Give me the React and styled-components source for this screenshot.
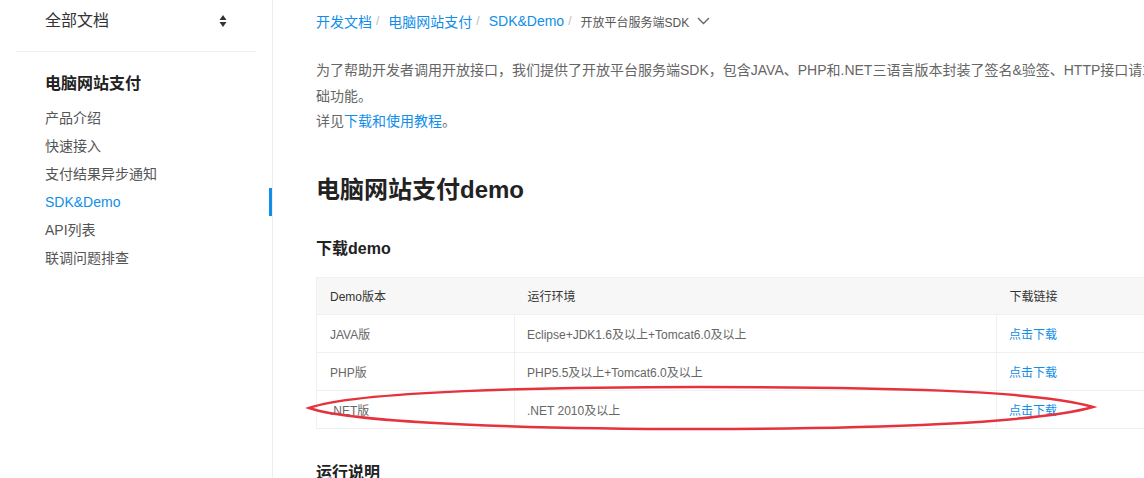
import React from "react";
import styled, { createGlobalStyle } from "styled-components";

const Global = createGlobalStyle`
  html, body { margin: 0; padding: 0; overflow: hidden; background: #fff; }
  body { font-family: "Liberation Sans", "Noto Sans CJK SC", sans-serif; color: #333; }
  * { box-sizing: border-box; }
`;

const Page = styled.div`
  display: flex;
  align-items: stretch;
  width: 1144px;
  height: 478px;
  overflow: hidden;
`;

const Sidebar = styled.aside`
  flex: 0 0 273px;
  border-right: 1px solid #eeeeee;
`;

const SideHeader = styled.div`
  margin: 0 16px;
  padding: 0 29px 9px;
  height: 52px;
  border-bottom: 1px solid #efefef;
  display: flex;
  align-items: center;
  justify-content: space-between;
  font-size: 16px;
  line-height: 42px;
  color: #333;
  & > span { display: block; height: 42px; }
`;

const SortIcon = styled.svg`
  display: block;
  width: 8px;
  height: 14px;
`;

const SideTitle = styled.div`
  margin-top: 20px;
  padding-left: 45px;
  font-size: 16px;
  font-weight: bold;
  line-height: 24px;
  color: #222;
`;

const NavList = styled.ul`
  list-style: none;
  margin: 8px 0 0;
  padding: 0;
`;

const NavItem = styled.li`
  padding-left: 45px;
  font-size: 14px;
  line-height: 28px;
  height: 28px;
  color: ${(p) => (p.$active ? "#108ee9" : "#555")};
  border-right: 3px solid ${(p) => (p.$active ? "#108ee9" : "transparent")};
`;

const Main = styled.main`
  flex: 0 0 auto;
  padding-left: 43px;
`;

const Content = styled.div`
  width: 870px;
`;

const Breadcrumb = styled.nav`
  display: flex;
  align-items: center;
  height: 42px;
  font-size: 14px;
`;

const Crumb = styled.a`
  color: #108ee9;
  text-decoration: none;
`;

const Sep = styled.span`
  color: #bbb;
  font-size: 12px;
  margin: 0 9px 0 4px;
`;

const CurrentCrumb = styled.span`
  color: #555;
  font-size: 12px;
  display: flex;
  align-items: center;
  gap: 8px;
`;

const Chevron = styled.svg`
  display: block;
  width: 13px;
  height: 8px;
`;

const Paragraph = styled.p`
  margin: 16px 0 0;
  font-size: 14px;
  line-height: 25.5px;
  color: #666;
`;

const Link = styled.a`
  color: #108ee9;
  text-decoration: none;
`;

const H2 = styled.h2`
  margin: 39px 0 0;
  font-size: 24px;
  line-height: 32px;
  font-weight: bold;
  color: #222;
`;

const H3 = styled.h3`
  margin: ${(p) => p.$mt}px 0 0;
  font-size: 16px;
  line-height: 24px;
  font-weight: bold;
  color: #222;
`;

const TableWrap = styled.div`
  position: relative;
  margin-top: 16px;
`;

const Table = styled.table`
  width: 870px;
  border-collapse: collapse;
  table-layout: fixed;
  font-size: 12px;
  color: #666;
  border: 1px solid #f0f0f0;
`;

const Th = styled.th`
  height: 37px;
  padding: 0 13px;
  text-align: left;
  font-weight: normal;
  color: #333;
  background: #f7f7f7;
`;

const Td = styled.td`
  height: 38px;
  padding: 0 12px;
  border-top: 1px solid #f0f0f0;
  border-left: 1px solid #f0f0f0;
  &:first-child { border-left: none; padding-left: 13px; }
`;

const Overlay = styled.svg`
  position: absolute;
  left: 0;
  top: 0;
  overflow: visible;
  pointer-events: none;
`;

const rows = [
  ["JAVA版", "Eclipse+JDK1.6及以上+Tomcat6.0及以上"],
  ["PHP版", "PHP5.5及以上+Tomcat6.0及以上"],
  [".NET版", ".NET 2010及以上"],
];

const navItems = ["产品介绍", "快速接入", "支付结果异步通知", "SDK&Demo", "API列表", "联调问题排查"];

export default function App() {
  return (
    <>
      <Global />
      <Page>
        <Sidebar>
          <SideHeader>
            <span>全部文档</span>
            <SortIcon viewBox="0 0 8 14">
              <path d="M4 1 L7.5 6 L0.5 6 Z" fill="#333" />
              <path d="M4 13 L7.5 8 L0.5 8 Z" fill="#333" />
            </SortIcon>
          </SideHeader>
          <SideTitle>电脑网站支付</SideTitle>
          <NavList>
            {navItems.map((n) => (
              <NavItem key={n} $active={n === "SDK&Demo"}>
                {n}
              </NavItem>
            ))}
          </NavList>
        </Sidebar>
        <Main>
          <Content>
            <Breadcrumb>
              <Crumb>开发文档</Crumb>
              <Sep>/</Sep>
              <Crumb>电脑网站支付</Crumb>
              <Sep>/</Sep>
              <Crumb>SDK&amp;Demo</Crumb>
              <Sep>/</Sep>
              <CurrentCrumb>
                开放平台服务端SDK
                <Chevron viewBox="0 0 13 8">
                  <path d="M1 1 L6.5 6.5 L12 1" fill="none" stroke="#666" strokeWidth="1.4" />
                </Chevron>
              </CurrentCrumb>
            </Breadcrumb>
            <Paragraph>
              为了帮助开发者调用开放接口，我们提供了开放平台服务端SDK，包含JAVA、PHP和.NET三语言版本封装了签名&amp;验签、HTTP接口请求等基础功能。
              <br />
              详见<Link>下载和使用教程</Link>。
            </Paragraph>
            <H2>电脑网站支付demo</H2>
            <H3 $mt={31}>下载demo</H3>
            <TableWrap>
              <Table>
                <colgroup>
                  <col style={{ width: 198 }} />
                  <col style={{ width: 482 }} />
                  <col />
                </colgroup>
                <thead>
                  <tr>
                    <Th>Demo版本</Th>
                    <Th>运行环境</Th>
                    <Th>下载链接</Th>
                  </tr>
                </thead>
                <tbody>
                  {rows.map(([a, b]) => (
                    <tr key={a}>
                      <Td>{a}</Td>
                      <Td>{b}</Td>
                      <Td>
                        <Link>点击下载</Link>
                      </Td>
                    </tr>
                  ))}
                </tbody>
              </Table>
              <Overlay width="870" height="160">
                <path
                  d="M -7 131 C 40 114, 230 110, 384 110 C 560 110, 720 113, 777 130 C 720 146, 560 152, 384 152 C 230 152, 40 147, -7 131 Z"
                  fill="none"
                  stroke="#e5333d"
                  strokeWidth="2.5"
                />
              </Overlay>
            </TableWrap>
            <H3 $mt={32}>运行说明</H3>
          </Content>
        </Main>
      </Page>
    </>
  );
}
